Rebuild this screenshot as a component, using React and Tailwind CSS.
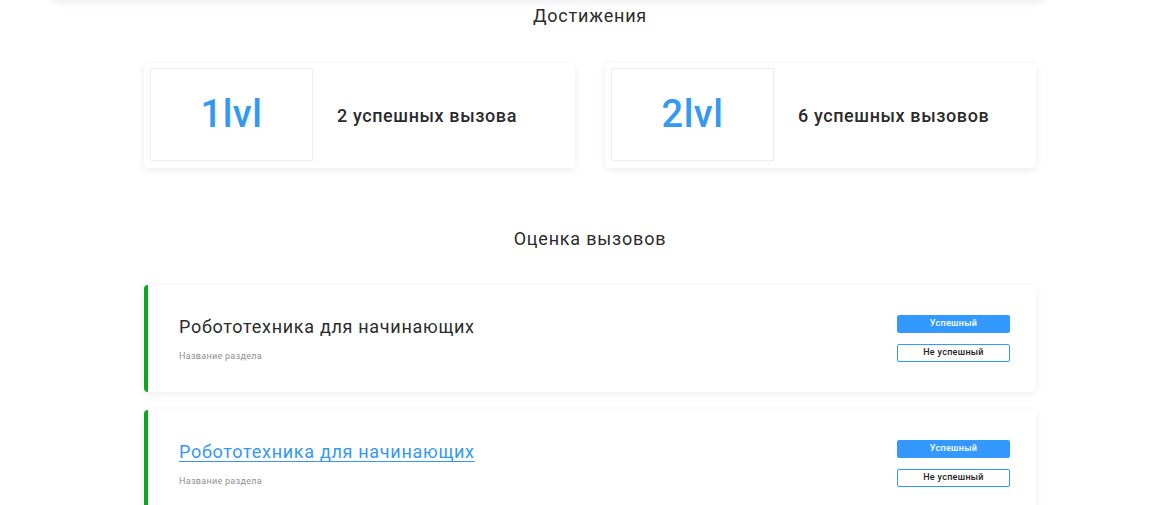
import React from 'react';

const achievements = [
  { level: '1lvl', text: '2 успешных вызова' },
  { level: '2lvl', text: '6 успешных вызовов' },
];

const challenges = [
  { title: 'Робототехника для начинающих', section: 'Название раздела', link: false },
  { title: 'Робототехника для начинающих', section: 'Название раздела', link: true },
];

function AchievementCard({ level, text }) {
  return (
    <div className="flex h-[105px] items-center gap-6 rounded-sm bg-white pl-[6px] shadow-[0_2px_8px_rgba(0,0,0,0.08)]">
      <div className="mt-[5px] flex h-[93px] w-[163px] self-start items-center justify-center border border-[#eeeeee]">
        <span className="text-[38px] font-medium tracking-[0.5px] text-[#3399f3]">{level}</span>
      </div>
      <span className="text-[18px] font-medium tracking-[0.6px] text-[#2b2b2b]">{text}</span>
    </div>
  );
}

function ChallengeCard({ title, section, link }) {
  return (
    <div className="flex h-[107px] items-center justify-between rounded-sm border-l-4 border-[#0aa91a] bg-white pl-[31px] pr-[26px] shadow-[0_2px_8px_rgba(0,0,0,0.07)]">
      <div className="flex flex-col">
        {link ? (
          <a href="#" className="text-[18px] font-normal tracking-[0.7px] text-[#3399f3] underline underline-offset-[3px]">
            {title}
          </a>
        ) : (
          <span className="text-[18px] font-normal tracking-[0.7px] text-[#2b2b2b]">{title}</span>
        )}
        <span className="mt-[10px] text-[9px] font-normal tracking-[0.3px] text-[#8f8f8f]">{section}</span>
      </div>
      <div className="flex flex-col gap-[11px]">
        <button className="h-[18px] w-[113px] rounded-[2px] bg-[#3399ff] text-[9px] font-medium tracking-[0.3px] text-white">
          Успешный
        </button>
        <button className="h-[18px] w-[113px] rounded-[2px] border border-[#3399ff] bg-white text-[9px] font-medium tracking-[0.3px] text-[#222222]">
          Не успешный
        </button>
      </div>
    </div>
  );
}

export default function App() {
  return (
    <div className="min-h-[505px] overflow-hidden bg-white font-['Roboto',sans-serif]">
      {/* bottom edge of the previous card */}
      <div className="-mt-[12px] ml-[48px] h-[12px] w-[1000px] rounded-b-xl bg-white shadow-[0_2px_10px_rgba(0,0,0,0.08)]" />

      <div className="ml-[144px] w-[892px]">
        <h2 className="mt-[2px] text-center text-[18px] font-normal tracking-[0.8px] text-[#2b2b2b]">
          Достижения
        </h2>
        <div className="mt-[34px] grid grid-cols-2 gap-[30px]">
          {achievements.map((a) => (
            <AchievementCard key={a.level} {...a} />
          ))}
        </div>

        <h2 className="mt-[57px] text-center text-[18px] font-normal tracking-[0.8px] text-[#2b2b2b]">
          Оценка вызовов
        </h2>
        <div className="mt-[33px] flex flex-col gap-[18px]">
          {challenges.map((c, i) => (
            <ChallengeCard key={i} {...c} />
          ))}
        </div>
      </div>
    </div>
  );
}
